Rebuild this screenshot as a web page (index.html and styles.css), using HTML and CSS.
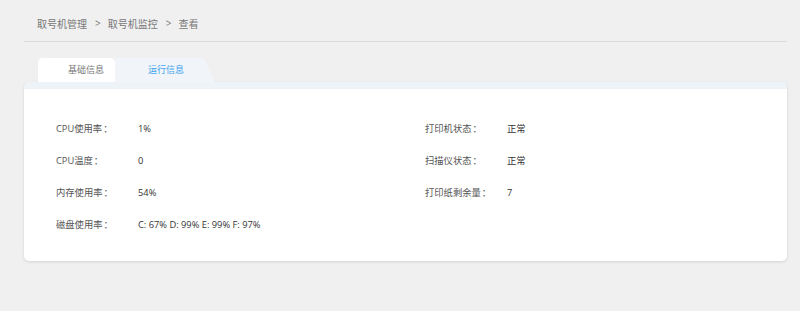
FILE: index.html
```html
<!DOCTYPE html>
<html lang="zh-CN">
<head>
<meta charset="utf-8">
<title>查看</title>
<link rel="stylesheet" href="styles.css">
</head>
<body>
<div class="page">
  <div class="crumbs">
    <span>取号机管理</span><span class="sep">&gt;</span><span>取号机监控</span><span class="sep">&gt;</span><span>查看</span>
  </div>
  <div class="tabs">
    <div class="tab tab-basic">基础信息</div>
    <div class="tab tab-run">运行信息</div>
  </div>
  <div class="card">
    <div class="grid">
      <div class="col">
        <div class="row"><span class="label">CPU使用率<span class="colon">：</span></span><span class="value">1%</span></div>
        <div class="row"><span class="label">CPU温度<span class="colon">：</span></span><span class="value">0</span></div>
        <div class="row"><span class="label">内存使用率<span class="colon">：</span></span><span class="value">54%</span></div>
        <div class="row"><span class="label">磁盘使用率<span class="colon">：</span></span><span class="value">C: 67% D: 99% E: 99% F: 97%</span></div>
      </div>
      <div class="col">
        <div class="row"><span class="label">打印机状态<span class="colon">：</span></span><span class="value">正常</span></div>
        <div class="row"><span class="label">扫描仪状态<span class="colon">：</span></span><span class="value">正常</span></div>
        <div class="row"><span class="label">打印纸剩余量<span class="colon">：</span></span><span class="value">7</span></div>
      </div>
    </div>
  </div>
</div>
</body>
</html>
```

FILE: styles.css
```css
html, body {
  margin: 0;
  padding: 0;
}
body {
  background: #f0f0f0;
  font-family: "Open Sans", "Noto Sans CJK SC", sans-serif;
  color: #333;
  width: 800px;
  height: 311px;
  overflow: hidden;
}
.page {
  margin-left: 24px;
  width: 763px;
}
.crumbs {
  height: 42px;
  box-sizing: border-box;
  border-bottom: 1px solid #dcdcdc;
  padding: 5px 0 0 13px;
  display: flex;
  align-items: center;
  font-size: 10px;
  color: #777;
}
.sep {
  margin: 0 7px 0 8px;
}
.tabs {
  display: flex;
  margin-top: 16px;
  margin-left: 14px;
  height: 24px;
  align-items: flex-end;
}
.tab {
  height: 24px;
  box-sizing: border-box;
  font-size: 9px;
  line-height: 24px;
}
.tab-basic {
  width: 77px;
  padding-left: 30px;
  background: #fff;
  color: #777;
  border-radius: 5px 5px 0 0;
}
.tab-run {
  width: 100px;
  padding-left: 33px;
  background: #f1f5f9;
  color: #3fa3ef;
  clip-path: polygon(0 0, 87px 0, 89px 1px, 100% 100%, 0 100%);
}
.card {
  background: #fff;
  border-top: 7px solid #eef3f8;
  border-radius: 5px;
  box-shadow: 0 1px 3px rgba(0, 0, 0, 0.12);
  height: 179px;
  box-sizing: border-box;
  padding: 23px 0 0 32px;
}
.grid {
  display: grid;
  grid-template-columns: 369px 1fr;
}
.row {
  height: 32px;
  display: flex;
  align-items: center;
  font-size: 9.3px;
}
.label {
  width: 82px;
  flex: none;
  color: #555;
}
.colon {
  font-family: "Noto Sans CJK TC", sans-serif;
  margin-left: 1px;
}
.value {
  color: #333;
}
```
